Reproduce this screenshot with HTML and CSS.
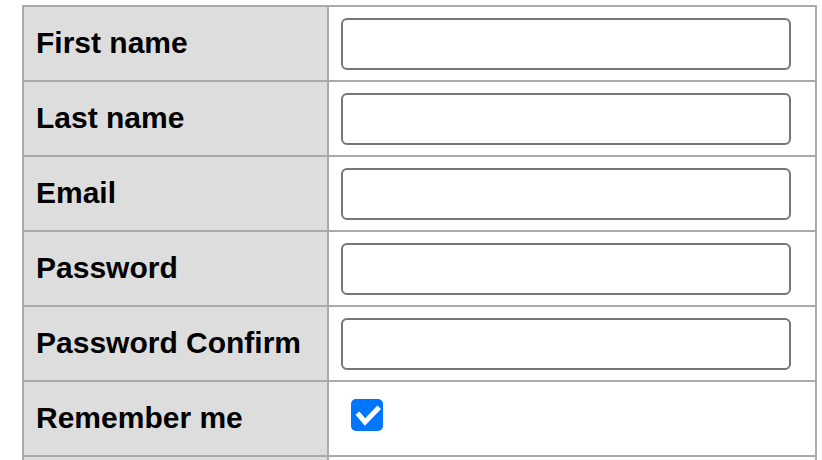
FILE: index.html
```html
<!DOCTYPE html>
<html>
<head>
<meta charset="utf-8">
<link rel="stylesheet" href="styles.css">
</head>
<body>
<form class="signup">
  <table class="form-table">
    <tbody>
      <tr>
        <th class="label-cell"><label for="first">First name</label></th>
        <td class="field-cell"><input class="text-input" id="first" type="text"></td>
      </tr>
      <tr>
        <th class="label-cell"><label for="last">Last name</label></th>
        <td class="field-cell"><input class="text-input" id="last" type="text"></td>
      </tr>
      <tr>
        <th class="label-cell"><label for="email">Email</label></th>
        <td class="field-cell"><input class="text-input" id="email" type="email"></td>
      </tr>
      <tr>
        <th class="label-cell"><label for="pw">Password</label></th>
        <td class="field-cell"><input class="text-input" id="pw" type="password"></td>
      </tr>
      <tr>
        <th class="label-cell"><label for="pwc">Password Confirm</label></th>
        <td class="field-cell"><input class="text-input" id="pwc" type="password"></td>
      </tr>
      <tr>
        <th class="label-cell"><label for="remember">Remember me</label></th>
        <td class="field-cell">
          <label class="check">
            <input class="check-input" id="remember" type="checkbox" checked>
            <svg class="check-box" width="32" height="32" viewBox="0 0 32 32" aria-hidden="true">
              <rect x="0" y="0" width="32" height="32" rx="5" fill="#0075ff"/>
              <path d="M8 16 L14 23 L26.5 10" fill="none" stroke="#fff" stroke-width="5" stroke-linecap="square" stroke-linejoin="miter"/>
            </svg>
          </label>
        </td>
      </tr>
      <tr>
        <th class="label-cell"></th>
        <td class="field-cell"></td>
      </tr>
    </tbody>
  </table>
</form>
</body>
</html>
```

FILE: styles.css
```css
html, body {
  margin: 0;
  background: #fff;
}
body {
  padding: 5px 0 0 22px;
  font-family: "Liberation Sans", Arial, sans-serif;
  color: #000;
}
.form-table {
  border-collapse: separate;
  border-spacing: 0;
  table-layout: fixed;
  width: 795px;
  border-left: 2px solid #aaa;
  border-top: 2px solid #aaa;
}
.label-cell,
.field-cell {
  height: 73px;
  padding: 0;
  border-right: 2px solid #aaa;
  border-bottom: 2px solid #aaa;
  vertical-align: middle;
  box-sizing: content-box;
}
.label-cell {
  width: 279px;
  padding: 0 12px 0 12px;
  background: #ddd;
  text-align: left;
  font-size: 30px;
  font-weight: bold;
  white-space: nowrap;
}
.label-cell label {
  display: block;
  margin-bottom: 2px;
}
.field-cell {
  padding: 0 24px 0 12px;
  background: #fff;
}
.text-input {
  display: block;
  box-sizing: border-box;
  width: 450px;
  height: 52px;
  margin: 0;
  border: 2px solid #767676;
  border-radius: 6px;
  background: #fff;
  font-size: 24px;
}
.check {
  display: flex;
  align-items: center;
  padding-left: 10px;
}
.check-input {
  position: absolute;
  opacity: 0;
  width: 1px;
  height: 1px;
  margin: 0;
}
.check-box {
  display: block;
  margin-bottom: 7px;
}
```
